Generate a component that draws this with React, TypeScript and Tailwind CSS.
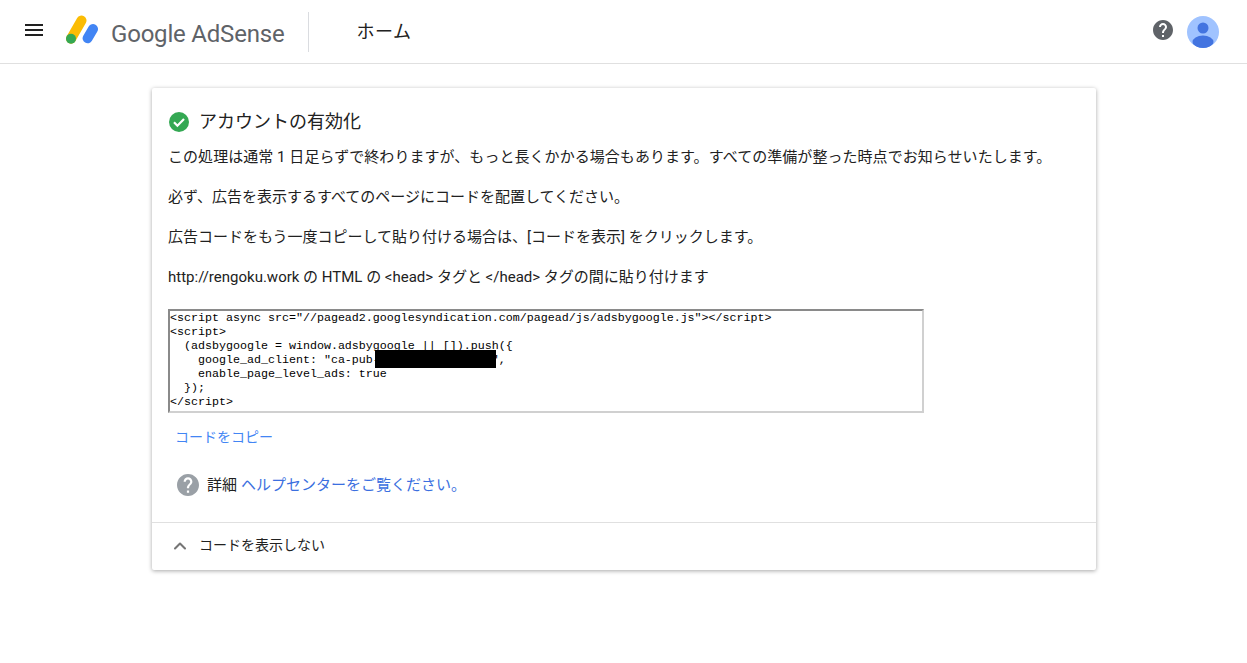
import { ChevronUp } from "lucide-react";

const sans = "font-['Roboto','Noto_Sans_CJK_JP',sans-serif]";

const codeLines = [
  '<script async src="//pagead2.googlesyndication.com/pagead/js/adsbygoogle.js"></script>',
  "<script>",
  "  (adsbygoogle = window.adsbygoogle || []).push({",
  '    google_ad_client: "ca-pub-0000000000000000",',
  "    enable_page_level_ads: true",
  "  });",
  "</script>",
];

function MenuIcon() {
  return (
    <svg width="24" height="24" viewBox="0 0 24 24" className="shrink-0">
      <path fill="#212121" d="M3 18h18v-2H3v2zm0-5h18v-2H3v2zm0-7v2h18V6H3z" />
    </svg>
  );
}

function AdSenseMark() {
  return (
    <svg width="32" height="30" viewBox="0 0 32 30" className="shrink-0">
      <line x1="15.5" y1="5.5" x2="5" y2="23.7" stroke="#fbbc04" strokeWidth="10" strokeLinecap="round" />
      <line x1="27" y1="14" x2="21.6" y2="23.3" stroke="#4285f4" strokeWidth="10" strokeLinecap="round" />
      <circle cx="5" cy="23.7" r="5" fill="#34a853" />
    </svg>
  );
}

function HelpIcon({ color, size }: { color: string; size: number }) {
  return (
    <svg width={size} height={size} viewBox="2 2 20 20" className="shrink-0">
      <path
        fill={color}
        d="M12 2C6.48 2 2 6.48 2 12s4.48 10 10 10 10-4.48 10-10S17.52 2 12 2zm1 17h-2v-2h2v2zm2.07-7.75l-.9.92C13.45 12.9 13 13.5 13 15h-2v-.5c0-1.1.45-2.1 1.17-2.83l1.24-1.26c.37-.36.59-.86.59-1.41 0-1.1-.9-2-2-2s-2 .9-2 2H8c0-2.21 1.79-4 4-4s4 1.79 4 4c0 .88-.36 1.68-.93 2.25z"
      />
    </svg>
  );
}

function Avatar() {
  return (
    <svg width="32" height="32" viewBox="0 0 32 32" className="shrink-0">
      <defs>
        <clipPath id="avatar-clip">
          <circle cx="16" cy="16" r="16" />
        </clipPath>
      </defs>
      <g clipPath="url(#avatar-clip)">
        <rect width="32" height="32" fill="#a0c3ff" />
        <circle cx="16" cy="12" r="5.5" fill="#4374e0" />
        <ellipse cx="16" cy="26" rx="10.5" ry="6.5" fill="#4374e0" />
      </g>
    </svg>
  );
}

function CheckIcon() {
  return (
    <svg width="20" height="20" viewBox="0 0 20 20" className="shrink-0">
      <circle cx="10" cy="10" r="10" fill="#34a853" />
      <path d="M5 10.3l3.4 3.4L15 7" fill="none" stroke="#fff" strokeWidth="2.2" />
    </svg>
  );
}

export default function App() {
  return (
    <div className={`min-h-[663px] bg-white text-[#212121] ${sans}`}>
      <header className="flex h-[64px] items-center border-b border-[#e0e0e0]">
        <div className="ml-[22px] -mt-[4px]">
          <MenuIcon />
        </div>
        <div className="ml-[20px] flex items-center">
          <div className="-mt-[3px]">
            <AdSenseMark />
          </div>
          <span className="ml-[13px] mt-[4px] text-[24px] leading-none tracking-[-0.2px] text-[#5f6368]">Google AdSense</span>
        </div>
        <div className="ml-[24px] h-[40px] w-px bg-[#dadce0]" />
        <div className="ml-[47px] text-[18px] tracking-[0.5px] text-[#212121]">ホーム</div>
        <div className="ml-auto mr-[28px] flex items-center gap-[14px]">
          <div className="-mt-[4px]">
            <HelpIcon color="#5f6368" size={20} />
          </div>
          <Avatar />
        </div>
      </header>

      <main className="ml-[152px] mt-[24px] w-[944px] rounded-[2px] bg-white shadow-[0_1px_4px_rgba(0,0,0,0.35)]">
        <div className="px-[16px] pt-[21px]">
          <div className="flex h-[26px] items-center gap-[10px] pl-[1px]">
            <CheckIcon />
            <h1 className="text-[18px] font-normal leading-[26px]">アカウントの有効化</h1>
          </div>
          <div className="mt-[11px] flex flex-col gap-[17px] text-[15px] leading-[23px]">
            <p className="tracking-[0.05px]">この処理は通常 1 日足らずで終わりますが、もっと長くかかる場合もあります。すべての準備が整った時点でお知らせいたします。</p>
            <p>必ず、広告を表示するすべてのページにコードを配置してください。</p>
            <p>広告コードをもう一度コピーして貼り付ける場合は、[コードを表示] をクリックします。</p>
            <p>http://rengoku.work の HTML の &lt;head&gt; タグと &lt;/head&gt; タグの間に貼り付けます</p>
          </div>
          <div className="relative mt-[20px] h-[104px] w-[756px] border-2 border-t-[#8a8a8a] border-l-[#8a8a8a] border-r-[#d0d0d0] border-b-[#d0d0d0] bg-white">
            <pre className="whitespace-pre font-['Liberation_Mono',monospace] text-[11.67px] leading-[14px] text-black">
              {codeLines.join("\n")}
            </pre>
            <div className="absolute left-[205px] top-[39px] h-[18px] w-[121px] bg-black" />
          </div>
          <div className="mt-[14px] pl-[7px] text-[14px] leading-[20px] text-[#4285f4]">コードをコピー</div>
          <div className="mt-[26px] flex items-center pl-[9px] text-[15px] leading-[24px]">
            <HelpIcon color="#9aa0a6" size={22} />
            <span className="ml-[8px]">詳細</span>
            <span className="ml-[4px] text-[#3b6fe0]">ヘルプセンターをご覧ください。</span>
          </div>
        </div>
        <div className="mt-[25px] flex h-[48px] items-center border-t border-[#e0e0e0] pb-[2px] pl-[18px] text-[14px]">
          <ChevronUp className="h-5 w-5 text-[#757575]" strokeWidth={2.5} />
          <span className="ml-[9px]">コードを表示しない</span>
        </div>
      </main>
    </div>
  );
}
